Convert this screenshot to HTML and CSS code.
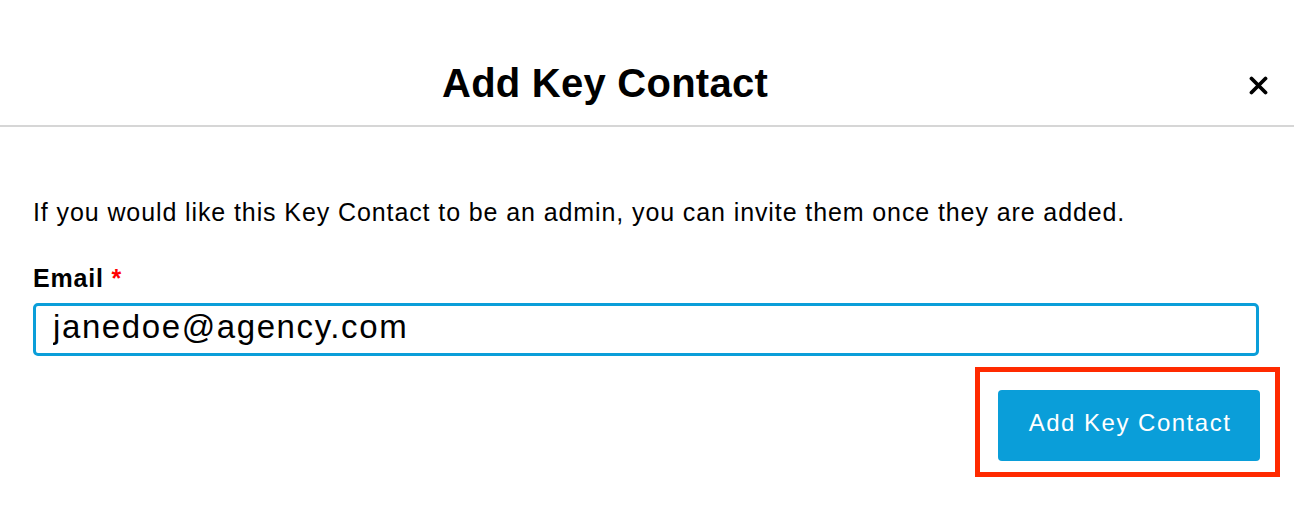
FILE: index.html
```html
<!DOCTYPE html>
<html lang="en">
<head>
<meta charset="utf-8">
<title>Add Key Contact</title>
<link rel="stylesheet" href="styles.css">
</head>
<body>
<div class="modal">
  <header class="modal-header">
    <h1 class="modal-title">Add Key Contact</h1>
    <button class="close-btn" aria-label="Close">
      <svg width="19" height="19" viewBox="0 0 19 19"><path d="M2.5 2.5 L16.5 16.5 M16.5 2.5 L2.5 16.5" stroke="#000" stroke-width="3.8" stroke-linecap="round"/></svg>
    </button>
  </header>
  <div class="modal-body">
    <p class="intro">If you would like this Key Contact to be an admin, you can invite them once they are added.</p>
    <label class="field-label" for="email">Email <span class="req">*</span></label>
    <input id="email" class="field-input" type="text" value="janedoe@agency.com">
    <div class="actions">
      <div class="highlight">
        <button class="primary-btn">Add Key Contact</button>
      </div>
    </div>
  </div>
</div>
</body>
</html>
```
FILE: styles.css
```css
* { box-sizing: border-box; }
html, body { margin: 0; padding: 0; background: #fff; }
body { font-family: "Liberation Sans", Arial, sans-serif; color: #000; }
.modal { width: 1294px; height: 510px; }
.modal-header {
  display: flex;
  align-items: flex-start;
  height: 127px;
  padding-top: 60px;
  border-bottom: 2px solid #d6d6d6;
}
.modal-title {
  flex: 1;
  margin: 0;
  padding-right: 12px;
  text-align: center;
  font-size: 40px;
  font-weight: bold;
  line-height: 46px;
  letter-spacing: 0.25px;
}
.close-btn {
  width: 72px;
  height: 19px;
  margin-top: 16px;
  border: 0;
  background: none;
  padding: 0;
  display: flex;
  align-items: center;
  justify-content: center;
}
.close-btn svg { display: block; }
.modal-body { padding: 0 35px 0 33px; }
.intro {
  margin: 70px 0 0;
  font-size: 25px;
  line-height: 30px;
  letter-spacing: 0.9px;
}
.field-label {
  display: block;
  margin-top: 36px;
  font-size: 25px;
  font-weight: bold;
  line-height: 30px;
  letter-spacing: 0.8px;
}
.req { color: #f00; }
.field-input {
  display: block;
  width: 100%;
  height: 53px;
  margin-top: 10px;
  border: 3px solid #0a9ed9;
  border-radius: 5px;
  padding: 0 17px 5px;
  font-family: "Liberation Sans", Arial, sans-serif;
  font-size: 33px;
  letter-spacing: 1.6px;
  color: #000;
  outline: none;
}
.actions {
  display: flex;
  justify-content: flex-end;
  margin-top: 11px;
  margin-right: -21px;
}
.highlight {
  border: 5px solid #ff2a00;
  padding: 18px 15px 11px 18px;
}
.primary-btn {
  display: block;
  width: 262px;
  height: 71px;
  border: 0;
  border-radius: 4px;
  background: #0a9ed9;
  color: #fff;
  padding: 0 0 6px 2px;
  font-family: "Liberation Sans", Arial, sans-serif;
  font-size: 24px;
  letter-spacing: 1.5px;
}
```
